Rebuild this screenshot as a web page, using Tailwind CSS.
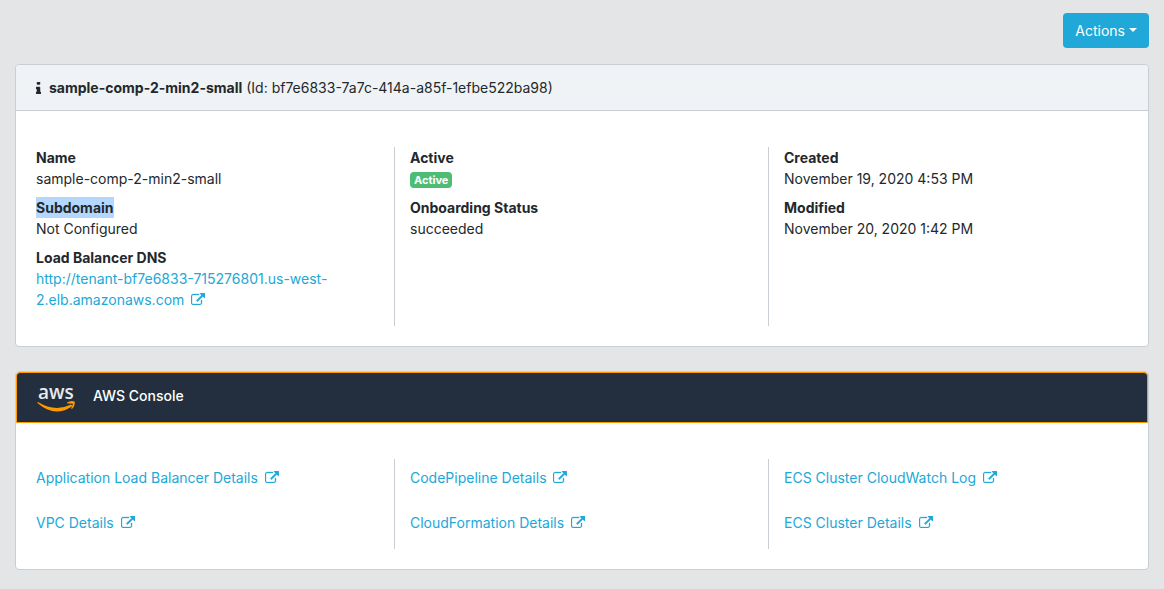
<!DOCTYPE html>
<html lang="en">
<head>
<meta charset="utf-8">
<meta name="viewport" content="width=device-width, initial-scale=1">
<title>Tenant details</title>
<script src="https://cdn.jsdelivr.net/npm/@tailwindcss/browser@4"></script>
</head>
<body class="min-h-screen bg-[#e4e5e6] px-[15px] pt-[13px] pb-5 font-['Inter','Liberation_Sans',sans-serif] text-sm leading-[21px] text-[#23282c]">
<svg class="hidden" aria-hidden="true">
  <symbol id="external" viewBox="0 0 1792 1536"><path stroke="currentColor" stroke-width="40" d="M1408 928v320q0 119-84.5 203.5T1120 1536H288q-119 0-203.5-84.5T0 1248V416q0-119 84.5-203.5T288 128h704q14 0 23 9t9 23v64q0 14-9 23t-23 9H288q-66 0-113 47t-47 113v832q0 66 47 113t113 47h832q66 0 113-47t47-113V928q0-14 9-23t23-9h64q14 0 23 9t9 23zm384-864v512q0 26-19 45t-45 19-45-19l-176-176-652 652q-10 10-23 10t-23-10l-114-114q-10-10-10-23t10-23l652-652-176-176q-19-19-19-45t19-45 45-19h512q26 0 45 19t19 45z"/></symbol>
</svg>
<main>
  <div class="flex justify-end">
    <button type="button" class="flex h-[35px] items-center gap-1 rounded bg-[#20a8d8] px-3 text-white">Actions
      <span class="mb-0.5 border-x-4 border-t-4 border-x-transparent border-t-white"></span>
    </button>
  </div>

  <section class="mt-4 rounded border border-[#c8ced3] bg-white">
    <header class="flex items-center rounded-t border-b border-[#c8ced3] bg-[#f0f3f5] px-5 py-3">
      <svg class="mr-2 h-3 w-[5px] fill-current" viewBox="0 0 640 1536" aria-hidden="true"><path stroke="currentColor" stroke-width="60" d="M640 1344v128q0 26-19 45t-45 19H64q-26 0-45-19t-19-45v-128q0-26 19-45t45-19h64V896H64q-26 0-45-19T0 832V704q0-26 19-45t45-19h384q26 0 45 19t19 45v576h64q26 0 45 19t19 45zM512 64v192q0 26-19 45t-45 19H192q-26 0-45-19t-19-45V64q0-26 19-45t45-19h256q26 0 45 19t19 45z"/></svg>
      <h1><strong class="font-bold">sample-comp-2-min2-small</strong> (Id: bf7e6833-7a7c-414a-a85f-1efbe522ba98)</h1>
    </header>
    <div class="grid grid-cols-3 px-[5px] pt-9 pb-5">
      <dl class="border-r border-[#c8ced3] px-[15px] pb-4">
        <dt class="font-bold">Name</dt>
        <dd class="mb-2">sample-comp-2-min2-small</dd>
        <dt class="font-bold"><mark class="inline-block bg-[#b3d7ff] align-top text-inherit">Subdomain</mark></dt>
        <dd class="mb-2">Not Configured</dd>
        <dt class="font-bold">Load Balancer DNS</dt>
        <dd><a href="#" class="text-[#20a8d8]">http://tenant-bf7e6833-715276801.us-west-<wbr>2.elb.amazonaws.com <svg class="ml-[3px] inline h-3 w-3.5 fill-current align-baseline" aria-hidden="true"><use href="#external"/></svg></a></dd>
      </dl>
      <dl class="border-r border-[#c8ced3] px-[15px]">
        <dt class="font-bold">Active</dt>
        <dd class="mb-2 flex h-[21px] items-center"><span class="mt-0.5 rounded bg-[#4dbd74] px-1 text-[11px] leading-4 font-bold text-white">Active</span></dd>
        <dt class="font-bold">Onboarding Status</dt>
        <dd>succeeded</dd>
      </dl>
      <dl class="px-[15px]">
        <dt class="font-bold">Created</dt>
        <dd class="mb-2">November 19, 2020 4:53 PM</dd>
        <dt class="font-bold">Modified</dt>
        <dd>November 20, 2020 1:42 PM</dd>
      </dl>
    </div>
  </section>

  <section class="mt-6 rounded border border-[#c8ced3] bg-white">
    <header class="flex h-[51px] items-center rounded-t-sm border border-[#ff9900] bg-[#232f3e] px-5 pb-1 text-white">
      <svg class="mr-[18px] h-[34px] w-[38px] overflow-visible" viewBox="0 -9 38 34" role="img" aria-label="AWS">
        <text x="1" y="11" font-family="Open Sans, sans-serif" font-size="19" font-weight="600" fill="#e8eaec">aws</text>
        <path d="M1 14Q18 24.500 34 16.500L35.500 18Q18 30.500 .500 15Q.300 14 1 14Z" fill="#f90"/>
        <path d="M30 14.500Q34 12 37.700 13.500Q38.300 17.500 35 21Q34.300 21.200 34.300 20.300L36 15.800Q34 15.200 31 15.600Q29.800 15.500 30 14.500Z" fill="#f90"/>
      </svg>
      <h2 class="font-medium">AWS Console</h2>
    </header>
    <div class="grid grid-cols-3 px-[5px] pt-9 pb-5 text-[#20a8d8]">
      <div class="flex flex-col items-start gap-6 border-r border-[#c8ced3] px-[15px] pt-2 pb-4">
        <a href="#">Application Load Balancer Details <svg class="ml-[3px] inline h-3 w-3.5 fill-current align-baseline" aria-hidden="true"><use href="#external"/></svg></a>
        <a href="#">VPC Details <svg class="ml-[3px] inline h-3 w-3.5 fill-current align-baseline" aria-hidden="true"><use href="#external"/></svg></a>
      </div>
      <div class="flex flex-col items-start gap-6 border-r border-[#c8ced3] px-[15px] pt-2 pb-4">
        <a href="#">CodePipeline Details <svg class="ml-[3px] inline h-3 w-3.5 fill-current align-baseline" aria-hidden="true"><use href="#external"/></svg></a>
        <a href="#">CloudFormation Details <svg class="ml-[3px] inline h-3 w-3.5 fill-current align-baseline" aria-hidden="true"><use href="#external"/></svg></a>
      </div>
      <div class="flex flex-col items-start gap-6 px-[15px] pt-2 pb-4">
        <a href="#">ECS Cluster CloudWatch Log <svg class="ml-[3px] inline h-3 w-3.5 fill-current align-baseline" aria-hidden="true"><use href="#external"/></svg></a>
        <a href="#">ECS Cluster Details <svg class="ml-[3px] inline h-3 w-3.5 fill-current align-baseline" aria-hidden="true"><use href="#external"/></svg></a>
      </div>
    </div>
  </section>
</main>
</body>
</html>
